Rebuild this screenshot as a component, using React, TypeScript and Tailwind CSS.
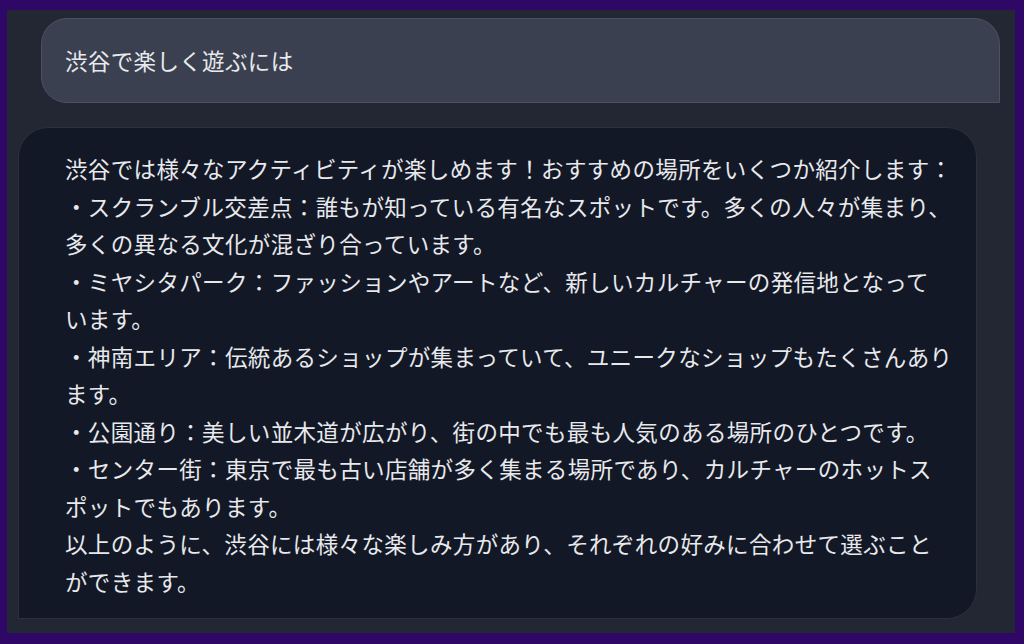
const lines: string[][] = [
  ["渋谷では様々なアクティビティが楽しめます！おすすめの場所をいくつか紹介します："],
  ["・スクランブル交差点：誰もが知っている有名なスポットです。多くの人々が集まり、", "多くの異なる文化が混ざり合っています。"],
  ["・ミヤシタパーク：ファッションやアートなど、新しいカルチャーの発信地となって", "います。"],
  ["・神南エリア：伝統あるショップが集まっていて、ユニークなショップもたくさんあり", "ます。"],
  ["・公園通り：美しい並木道が広がり、街の中でも最も人気のある場所のひとつです。"],
  ["・センター街：東京で最も古い店舗が多く集まる場所であり、カルチャーのホットス", "ポットでもあります。"],
  ["以上のように、渋谷には様々な楽しみ方があり、それぞれの好みに合わせて選ぶこと", "ができます。"],
];

export default function App() {
  return (
    <div className="h-[644px] w-[1024px] bg-[#2e0767] pb-[11px] pl-[7px] pr-[9px] pt-[10px] font-['Noto_Sans_CJK_JP','Noto_Sans',sans-serif] tracking-[0.35px] text-[#e8e9ec]">
      <div className="flex h-full flex-col gap-[24px] bg-[#222733] pt-[8px]">
        <div className="ml-[34px] flex h-[85px] w-[959px] items-center rounded-t-[26px] rounded-bl-[26px] border border-[#4a5161] bg-[#3a404f] pl-[23px] text-[22.5px]">
          渋谷で楽しく遊ぶには
        </div>
        <div className="ml-[11px] h-[492px] w-[959px] rounded-t-[30px] rounded-br-[30px] border border-[#2b303d] bg-[#131826] pl-[46px] pt-[22px] text-[22.5px] leading-[37.5px]">
          {lines.map((group, i) => (
            <p key={i} className="whitespace-nowrap">
              {group.map((line, j) => (
                <span key={j} className="block">{line}</span>
              ))}
            </p>
          ))}
        </div>
      </div>
    </div>
  );
}
